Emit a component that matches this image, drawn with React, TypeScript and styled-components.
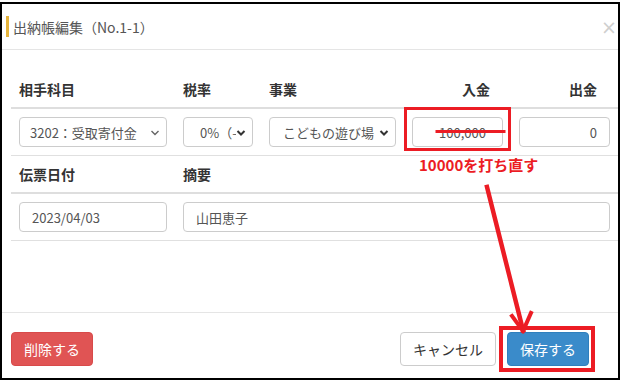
import React from "react";
import styled, { createGlobalStyle } from "styled-components";

const GlobalStyle = createGlobalStyle`
  html, body { margin: 0; padding: 0; background: #fff; }
  body { font-family: "Noto Sans CJK JP", "Noto Sans", sans-serif; color: #333; }
  * { box-sizing: border-box; }
`;

const Frame = styled.div`
  position: relative;
  margin-top: 2px;
  width: 620px;
  height: 378px;
  border: 2px solid #000;
  background: #fff;
  overflow: hidden;
  display: flex;
  flex-direction: column;
`;

const Header = styled.div`
  height: 46px;
  border-bottom: 1px solid #e5e5e5;
  display: flex;
  align-items: center;
  padding: 0 0 0 4px;
  flex-shrink: 0;
`;

const TitleMark = styled.span`
  width: 3px;
  height: 21px;
  background: #e6b43c;
  margin-right: 4px;
`;

const Title = styled.h4`
  margin: 0;
  font-size: 14px;
  font-weight: 400;
  color: #555;
  line-height: 20px;
`;

const Close = styled.button`
  margin-left: auto;
  margin-right: 1px;
  border: 0;
  background: none;
  padding: 0;
  font-family: "DejaVu Sans", sans-serif;
  font-size: 19px;
  line-height: 20px;
  color: #cfcfcf;
  cursor: pointer;
`;

const Body = styled.div`
  flex: 1;
  padding: 21px 0 0 9px;
`;

const Row = styled.div<{ $heavy?: boolean }>`
  display: grid;
  grid-template-columns: 164px 86px 143px 107px 107px;
  border-bottom: ${(p) => (p.$heavy ? "2px solid #dedede" : "1px solid #e0e0e0")};
`;

const Cell = styled.div<{ $span?: number; $right?: boolean }>`
  padding: 8px;
  grid-column: ${(p) => (p.$span ? `span ${p.$span}` : "auto")};
  text-align: ${(p) => (p.$right ? "right" : "left")};
  min-width: 0;
`;

const Label = styled.div<{ $right?: boolean }>`
  font-size: 14px;
  font-weight: 700;
  line-height: 20px;
  color: #333;
  padding-right: ${(p) => (p.$right ? "13px" : "0")};
`;

const SelectBox = styled.div<{ $indent?: number; $tight?: boolean }>`
  position: relative;
  height: 30px;
  border: 1px solid #ccc;
  border-radius: 4px;
  background: #fff;
  display: flex;
  align-items: center;
  padding: 0 ${(p) => (p.$tight ? 4 : 22)}px 0 ${(p) => p.$indent ?? 10}px;
  font-size: 13px;
  color: #555;
  white-space: nowrap;
`;

const SelectText = styled.span`
  flex: 1;
`;

const Chevron = styled.svg`
  position: absolute;
  right: 6px;
  top: 11px;
  background: #fff;
`;

const TextInput = styled.input<{ $right?: boolean; $padRight?: number }>`
  display: block;
  width: 100%;
  height: 30px;
  border: 1px solid #ccc;
  border-radius: 4px;
  padding: 0 ${(p) => p.$padRight ?? 12}px 0 12px;
  font-family: inherit;
  font-size: 13px;
  color: #555;
  text-align: ${(p) => (p.$right ? "right" : "left")};
  background: #fff;
  outline: none;
`;

const Footer = styled.div`
  height: 66px;
  flex-shrink: 0;
  border-top: 1px solid #e5e5e5;
  display: flex;
  align-items: flex-start;
  padding: 19px 29px 0 9px;
  gap: 11px;
`;

const Button = styled.button<{ $variant: "danger" | "default" | "primary" }>`
  height: 34px;
  padding: 0 12px;
  border-radius: 4px;
  font-family: inherit;
  font-size: 14px;
  line-height: 20px;
  cursor: pointer;
  border: 1px solid
    ${(p) => (p.$variant === "danger" ? "#d84a4a" : p.$variant === "primary" ? "#2f7fbd" : "#ccc")};
  background: ${(p) => (p.$variant === "danger" ? "#e05454" : p.$variant === "primary" ? "#3a8bca" : "#fff")};
  color: ${(p) => (p.$variant === "default" ? "#333" : "#fff")};
  &:first-child { margin-right: auto; }
`;

const RedBox = styled.div<{ $x: number; $y: number; $w: number; $h: number; $b: number }>`
  position: absolute;
  left: ${(p) => p.$x}px;
  top: ${(p) => p.$y}px;
  width: ${(p) => p.$w}px;
  height: ${(p) => p.$h}px;
  border: ${(p) => p.$b}px solid #ec1c24;
  pointer-events: none;
`;

const Note = styled.div`
  position: absolute;
  left: 417px;
  top: 151px;
  font-size: 15px;
  font-weight: 700;
  line-height: 20px;
  color: #ec1c24;
`;

const Overlay = styled.svg`
  position: absolute;
  left: 0;
  top: 0;
  pointer-events: none;
`;

const ChevronIcon = ({ bold }: { bold?: boolean }) => (
  <Chevron width="10" height="8" viewBox="0 0 10 8">
    <path d="M1.5 2 L5 5.5 L8.5 2" fill="none" stroke={bold ? "#333" : "#666"} strokeWidth={bold ? 2 : 1.4} />
  </Chevron>
);

export default function App() {
  return (
    <>
      <GlobalStyle />
      <Frame>
        <Header>
          <TitleMark />
          <Title>出納帳編集（No.1-1）</Title>
          <Close aria-label="閉じる">×</Close>
        </Header>
        <Body>
          <Row $heavy>
            <Cell><Label>相手科目</Label></Cell>
            <Cell><Label>税率</Label></Cell>
            <Cell><Label>事業</Label></Cell>
            <Cell $right><Label $right>入金</Label></Cell>
            <Cell $right><Label $right>出金</Label></Cell>
          </Row>
          <Row>
            <Cell>
              <SelectBox>
                <SelectText>3202：受取寄付金</SelectText>
                <ChevronIcon />
              </SelectBox>
            </Cell>
            <Cell>
              <SelectBox $indent={16} $tight>
                <SelectText>0%（–</SelectText>
                <ChevronIcon bold />
              </SelectBox>
            </Cell>
            <Cell>
              <SelectBox $indent={13}>
                <SelectText>こどもの遊び場</SelectText>
                <ChevronIcon bold />
              </SelectBox>
            </Cell>
            <Cell><TextInput $right $padRight={16} defaultValue="100,000" /></Cell>
            <Cell><TextInput $right defaultValue="0" /></Cell>
          </Row>
          <Row $heavy>
            <Cell><Label>伝票日付</Label></Cell>
            <Cell $span={4}><Label>摘要</Label></Cell>
          </Row>
          <Row>
            <Cell><TextInput defaultValue="2023/04/03" /></Cell>
            <Cell $span={4}><TextInput defaultValue="山田恵子" /></Cell>
          </Row>
        </Body>
        <Footer>
          <Button $variant="danger">削除する</Button>
          <Button $variant="default">キャンセル</Button>
          <Button $variant="primary">保存する</Button>
        </Footer>

        <RedBox $x={402} $y={103} $w={107} $h={44} $b={3} />
        <RedBox $x={497} $y={322} $w={96} $h={46} $b={4} />
        <Note>10000を打ち直す</Note>
        <Overlay width="616" height="374" viewBox="0 0 616 374">
          <g stroke="#ec1c24" strokeLinecap="square" fill="none">
            <line x1="435" y1="127.5" x2="502" y2="127.5" strokeWidth="3" />
            <line x1="485" y1="183" x2="521" y2="326" strokeWidth="4.5" />
            <line x1="510" y1="312" x2="521" y2="327" strokeWidth="4" />
            <line x1="529" y1="309" x2="521" y2="327" strokeWidth="4" />
          </g>
        </Overlay>
      </Frame>
    </>
  );
}
